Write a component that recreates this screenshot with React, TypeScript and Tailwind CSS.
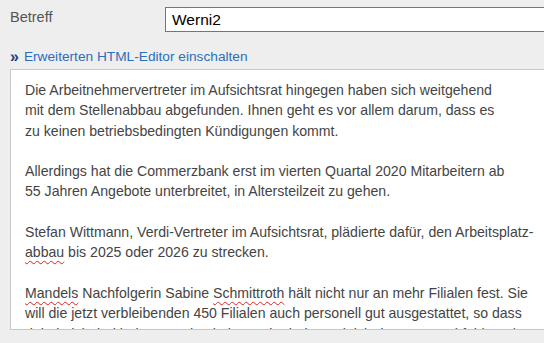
import React from "react";

const Err = ({ children }: { children: React.ReactNode }) => (
  <span className="underline decoration-wavy decoration-[#e02020] decoration-1 underline-offset-[3px]">{children}</span>
);

export default function App() {
  return (
    <div
      className="w-[544px] h-[343px] overflow-hidden bg-[#eeeeee] text-[#444444]"
      style={{ fontFamily: '"Liberation Sans", Arial, sans-serif' }}
    >
      <div className="flex items-center pt-[7px] pl-[10px]">
        <div className="w-[155px] text-[14.5px] text-[#555555] -mt-[4px]">Betreff</div>
        <div className="flex-1 h-[25px] bg-white border border-[#767676] border-r-0 pl-[6px] flex items-center text-[15.5px] text-black">
          Werni2
        </div>
      </div>
      <div className="flex items-center pl-[10px] mt-[18px] h-[15px] text-[13.7px]">
        <span className="font-bold text-[#1d3f7a] mr-[5px] text-[16px] leading-none -mt-[2px]">»</span>
        <span className="text-[#2a6ebb]">Erweiterten HTML-Editor einschalten</span>
      </div>
      <div className="ml-[10px] mt-[4px] h-[261px] bg-white border border-[#c8c8c8] border-r-0 overflow-hidden pl-[14px] pt-[10px] text-[14.1px] leading-[20.3px]">
        <div className="whitespace-nowrap">
          Die Arbeitnehmervertreter im Aufsichtsrat hingegen haben sich weitgehend
          <br />
          mit dem Stellenabbau abgefunden. Ihnen geht es vor allem darum, dass es
          <br />
          zu keinen betriebsbedingten Kündigungen kommt.
          <br />
          <br />
          Allerdings hat die Commerzbank erst im vierten Quartal 2020 Mitarbeitern ab
          <br />
          55 Jahren Angebote unterbreitet, in Altersteilzeit zu gehen.
          <br />
          <br />
          Stefan Wittmann, Verdi-Vertreter im Aufsichtsrat, plädierte dafür, den Arbeitsplatz-
          <br />
          <Err>abbau</Err> bis 2025 oder 2026 zu strecken.
          <br />
          <br />
          <Err>Mandels</Err> Nachfolgerin Sabine <Err>Schmittroth</Err> hält nicht nur an mehr Filialen fest. Sie
          <br />
          will die jetzt verbleibenden 450 Filialen auch personell gut ausgestattet, so dass
          <br />
          dabei nicht bei jedem Wechsel eines Mitarbeiters gleich das Personal fehlt und
        </div>
      </div>
    </div>
  );
}
